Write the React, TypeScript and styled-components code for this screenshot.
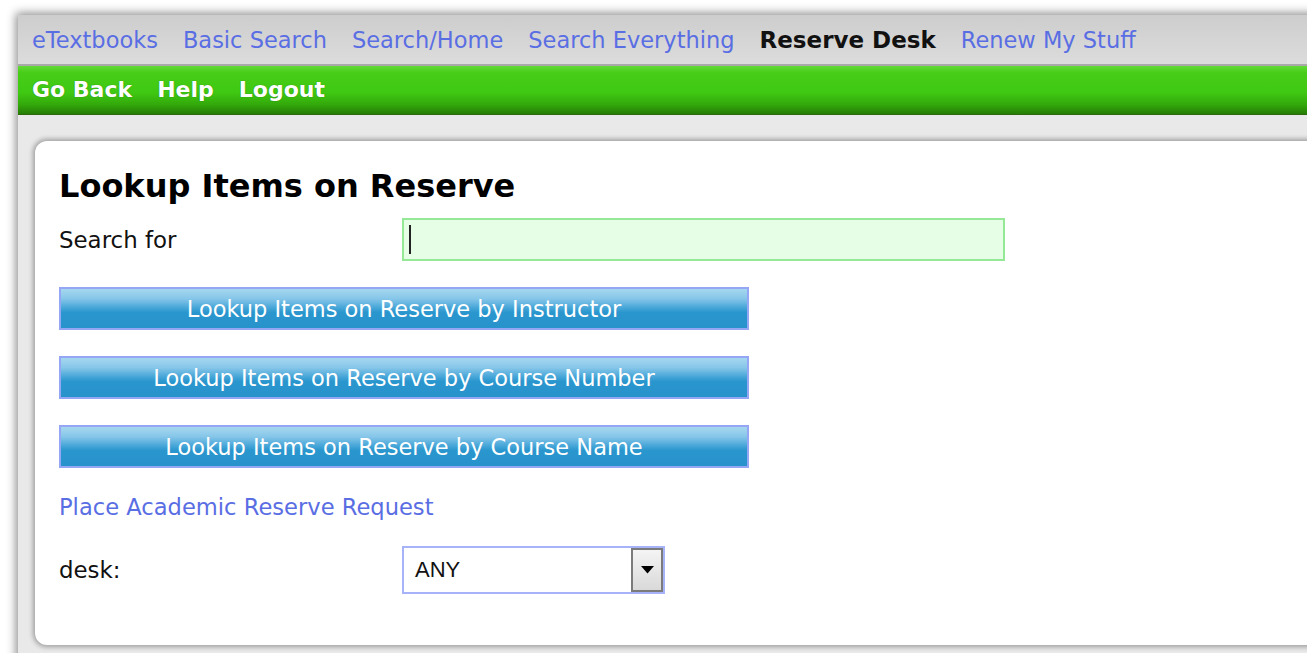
import React from 'react';
import styled, { createGlobalStyle } from 'styled-components';

const GlobalStyle = createGlobalStyle`
  html, body {
    margin: 0;
    padding: 0;
    background: #fff;
    overflow: hidden;
  }
  body {
    font-family: "DejaVu Sans", Verdana, sans-serif;
  }
`;

const Page = styled.div`
  width: 1307px;
  height: 653px;
  overflow: hidden;
  box-sizing: border-box;
  padding: 15px 0 0 18px;
`;

const Frame = styled.div`
  width: 1340px;
  height: 700px;
  background: #e9e9e9;
  box-shadow: 0 0 9px 2px rgba(0, 0, 0, 0.45);
`;

const TopNav = styled.nav`
  height: 51px;
  box-sizing: border-box;
  display: flex;
  align-items: center;
  gap: 25px;
  padding: 0 0 0 14px;
  background: linear-gradient(#cdcdcd, #dcdcdc);
  border-bottom: 2px solid #a9a9a9;
`;

const NavLink = styled.a<{ $active?: boolean }>`
  font-size: ${p => (p.$active ? '23px' : '22.5px')};
  text-decoration: none;
  cursor: pointer;
  color: ${p => (p.$active ? '#111' : '#5a6ee4')};
  font-weight: ${p => (p.$active ? 'bold' : 'normal')};
`;

const ActionBar = styled.div`
  height: 49px;
  box-sizing: border-box;
  display: flex;
  align-items: center;
  gap: 25px;
  padding: 0 0 2px 14px;
  background: linear-gradient(
    #63d936 0%,
    #47cd17 14%,
    #3fc912 55%,
    #33a90b 80%,
    #267d06 100%
  );
  border-bottom: 1px solid #2a6a0a;
`;

const ActionLink = styled.a`
  font-size: 22px;
  font-weight: bold;
  color: #fff;
  text-decoration: none;
  cursor: pointer;
  text-shadow: 0 0 1px rgba(0, 60, 0, 0.5);
`;

const Card = styled.section`
  margin: 26px 0 0 17px;
  height: 504px;
  box-sizing: border-box;
  background: #fff;
  border-radius: 12px;
  box-shadow: 0 0 5px 2px rgba(0, 0, 0, 0.32);
  padding: 26px 0 0 24px;
  display: flex;
  flex-direction: column;
`;

const Title = styled.h1`
  margin: 0 0 13px;
  font-size: 32px;
  line-height: 38px;
  font-weight: bold;
  color: #000;
`;

const FieldRow = styled.div`
  display: grid;
  grid-template-columns: 343px auto;
  align-items: center;
  justify-items: start;
`;

const Label = styled.span`
  font-size: 22.9px;
  color: #111;
`;

const TextField = styled.div`
  width: 603px;
  height: 43px;
  box-sizing: border-box;
  border: 2px solid #95e895;
  background: #e6fde6;
  display: flex;
  align-items: center;
  padding-left: 5px;
`;

const Caret = styled.span`
  width: 2px;
  height: 29px;
  background: #222;
`;

const Stack = styled.div`
  display: flex;
  flex-direction: column;
  gap: 26px;
  margin-top: 26px;
`;

const LookupButton = styled.button`
  width: 690px;
  height: 43px;
  box-sizing: border-box;
  border: 2px solid #95a6f4;
  background: linear-gradient(
    #a6d7ef 0%,
    #86c6e9 25%,
    #47a6d8 48%,
    #2a96ce 60%,
    #2892cb 100%
  );
  color: #fff;
  font-family: "DejaVu Sans", Verdana, sans-serif;
  font-size: 22.5px;
  padding: 0;
  cursor: pointer;
`;

const RequestLink = styled.a`
  font-size: 22.6px;
  line-height: 26px;
  color: #5a6ee4;
  text-decoration: none;
  cursor: pointer;
`;

const SelectBox = styled.div`
  width: 263px;
  height: 48px;
  box-sizing: border-box;
  border: 2px solid #a7b3f8;
  background: #fff;
  display: flex;
  align-items: center;
  justify-content: space-between;
  padding: 0 0 0 11px;
`;

const SelectValue = styled.span`
  font-family: "Liberation Sans", Arial, sans-serif;
  font-size: 22px;
  color: #111;
`;

const DropButton = styled.span`
  width: 32px;
  height: 44px;
  box-sizing: border-box;
  border: 2px solid #7b7b7b;
  background: linear-gradient(#f4f4f4, #d9d9d9);
  display: flex;
  align-items: center;
  justify-content: center;
`;

const navItems = [
  { label: 'eTextbooks' },
  { label: 'Basic Search' },
  { label: 'Search/Home' },
  { label: 'Search Everything' },
  { label: 'Reserve Desk', active: true },
  { label: 'Renew My Stuff' },
];

const lookups = ['Instructor', 'Course Number', 'Course Name'];

export default function App() {
  return (
    <>
      <GlobalStyle />
      <Page>
        <Frame>
          <TopNav>
            {navItems.map(item => (
              <NavLink key={item.label} $active={item.active}>
                {item.label}
              </NavLink>
            ))}
          </TopNav>
          <ActionBar>
            <ActionLink>Go Back</ActionLink>
            <ActionLink>Help</ActionLink>
            <ActionLink>Logout</ActionLink>
          </ActionBar>

          <Card>
            <Title>Lookup Items on Reserve</Title>
            <FieldRow>
              <Label>Search for</Label>
              <TextField>
                <Caret />
              </TextField>
            </FieldRow>

            <Stack>
              {lookups.map(by => (
                <LookupButton key={by}>Lookup Items on Reserve by {by}</LookupButton>
              ))}
              <RequestLink>Place Academic Reserve Request</RequestLink>
              <FieldRow>
                <Label>desk:</Label>
                <SelectBox>
                  <SelectValue>ANY</SelectValue>
                  <DropButton>
                    <svg width="13" height="8" viewBox="0 0 13 8">
                      <polygon points="0,0 13,0 6.5,7.5" fill="#000" />
                    </svg>
                  </DropButton>
                </SelectBox>
              </FieldRow>
            </Stack>
          </Card>
        </Frame>
      </Page>
    </>
  );
}
